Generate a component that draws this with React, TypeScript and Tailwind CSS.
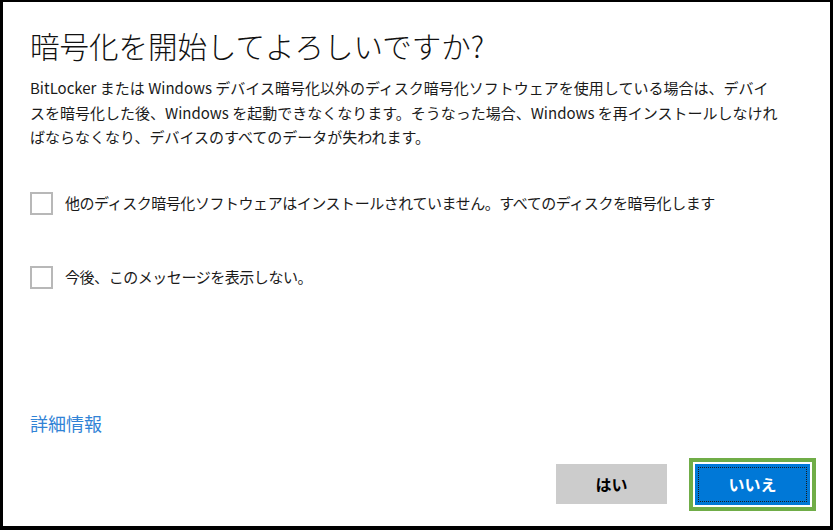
export default function App() {
  const jp = { fontFamily: '"Noto Sans CJK JP", "Noto Sans", sans-serif' };
  return (
    <div
      className="w-[833px] h-[530px] bg-white border-black border-l-[3px] border-t-2 border-r-[3px] border-b-4 flex flex-col pl-[27px] pr-[14px] text-black"
      style={jp}
    >
      {/* title */}
      <h1 className="mt-[25px] text-[29.5px] leading-[36px] font-light text-[#111]">
        暗号化を開始してよろしいですか?
      </h1>

      {/* description */}
      <p className="mt-[13px] text-[15px] leading-[24.5px] text-[#1a1a1a]">
        BitLocker または Windows デバイス暗号化以外のディスク暗号化ソフトウェアを使用している場合は、デバイ
        <br />
        スを暗号化した後、Windows を起動できなくなります。そうなった場合、Windows を再インストールしなけれ
        <br />
        ばならなくなり、デバイスのすべてのデータが失われます。
      </p>

      {/* checkboxes */}
      <label className="mt-[42px] flex items-center gap-[12px] h-[24px]">
        <span className="w-[23px] h-[23px] border-2 border-[#b8b8b8] bg-white shrink-0" />
        <span className="text-[15px] tracking-[-0.45px] text-[#1a1a1a]">
          他のディスク暗号化ソフトウェアはインストールされていません。すべてのディスクを暗号化します
        </span>
      </label>
      <label className="mt-[50px] flex items-center gap-[12px] h-[24px]">
        <span className="w-[23px] h-[23px] border-2 border-[#b8b8b8] bg-white shrink-0" />
        <span className="text-[15px] tracking-[-0.45px] text-[#1a1a1a]">今後、このメッセージを表示しない。</span>
      </label>

      {/* link */}
      <a className="mt-[120px] text-[18px] leading-[26px] text-[#3183d6] w-fit cursor-pointer">
        詳細情報
      </a>

      {/* buttons */}
      <div className="mt-[22px] flex items-center justify-end gap-[22px]">
        <button className="w-[111px] h-[40px] bg-[#cccccc] text-[16px] font-bold text-black">
          はい
        </button>
        <div className="border-4 border-[#70ad47] p-[2px] bg-white">
          <button className="w-[115px] h-[41px] bg-[#0078d7] p-[3px] text-[16px] font-bold text-white">
            <div className="w-full h-full border border-dotted border-[#1c1c1c] flex items-center justify-center">
              いいえ
            </div>
          </button>
        </div>
      </div>
    </div>
  );
}
